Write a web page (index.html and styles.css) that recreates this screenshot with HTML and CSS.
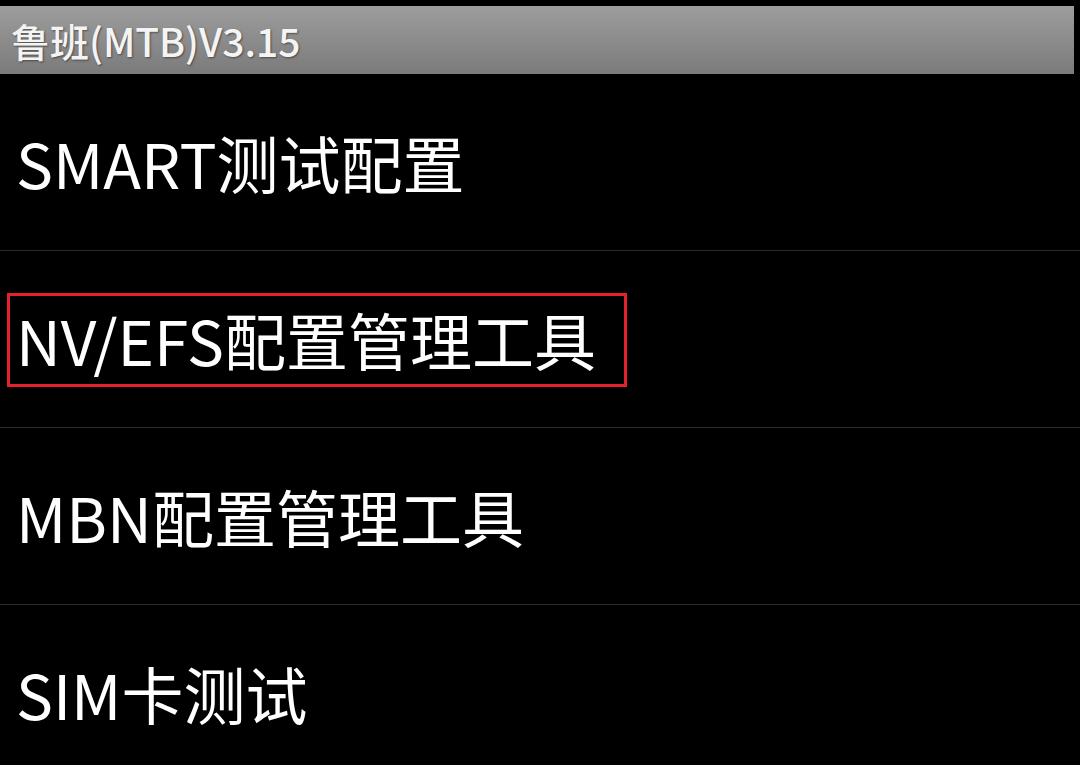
FILE: index.html
```html
<!DOCTYPE html>
<html>
<head>
<meta charset="utf-8">
<link rel="stylesheet" href="styles.css">
</head>
<body>
<div class="screen">
  <div class="titlebar"><span class="title">鲁班(MTB)V3.15</span></div>
  <ul class="menu">
    <li class="item"><span class="label">SMART测试配置</span></li>
    <li class="item"><span class="label marked">NV/EFS配置管理工具</span></li>
    <li class="item"><span class="label">MBN配置管理工具</span></li>
    <li class="item"><span class="label">SIM卡测试</span></li>
  </ul>
</div>
</body>
</html>
```
FILE: styles.css
```css
html, body {
  margin: 0;
  padding: 0;
  background: #000;
}
.screen {
  width: 1080px;
  height: 765px;
  overflow: hidden;
  background: #000;
  font-family: "Noto Sans CJK SC", "Noto Sans", sans-serif;
  color: #fff;
  padding-top: 6px;
  box-sizing: border-box;
}
.titlebar {
  width: 1074px;
  height: 68px;
  background: linear-gradient(#9d9d9d, #7b7b7b);
  display: flex;
  align-items: center;
  padding-left: 11px;
  box-sizing: border-box;
}
.title {
  font-size: 39px;
  font-weight: 500;
  color: #f4f4f4;
  text-shadow: 1px 1px 2px rgba(0,0,0,0.45);
  line-height: 1;
}
.menu {
  list-style: none;
  margin: 0;
  padding: 0;
}
.item {
  height: 176px;
  border-bottom: 1px solid #2a2a2a;
  display: flex;
  align-items: center;
  padding-left: 16px;
}
.label {
  font-size: 62px;
  line-height: 1;
  color: #fff;
}
.marked {
  position: relative;
}
.marked::after {
  content: "";
  position: absolute;
  left: -9px;
  right: -31px;
  top: -15px;
  bottom: -17px;
  border: 3px solid #e3222c;
}
```
